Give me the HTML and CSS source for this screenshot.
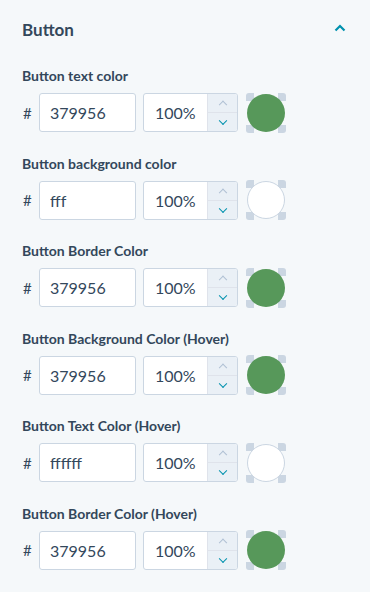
FILE: index.html
```html
<!doctype html>
<html lang="en">
  <head>
    <meta charset="UTF-8" />
    <title>Button colors</title>
    <link rel="stylesheet" href="styles.css">
  </head>

  <body>
    <div class="panel">
      <div class="panel-header">
        <h2 class="panel-title">Button</h2>
        <svg class="collapse" width="12" height="8" viewBox="0 0 12 8">
          <path d="M1.5 6.5 L6 2 L10.5 6.5" fill="none" stroke="#0091ae" stroke-width="2.2" />
        </svg>
      </div>

      <!-- Color fields -->
      <div class="field">
        <label class="field-label">Button text color</label>
        <div class="color-row">
          <span class="hash">#</span>
          <input class="hex-input" type="text" value="379956" />
          <div class="opacity">
            <input class="opacity-input" type="text" value="100%" />
            <div class="stepper">
              <span class="step up"></span>
              <span class="step down"></span>
            </div>
          </div>
          <div class="swatch"><span class="swatch-color green"></span></div>
        </div>
      </div>

      <div class="field">
        <label class="field-label">Button background color</label>
        <div class="color-row">
          <span class="hash">#</span>
          <input class="hex-input" type="text" value="fff" />
          <div class="opacity">
            <input class="opacity-input" type="text" value="100%" />
            <div class="stepper">
              <span class="step up"></span>
              <span class="step down"></span>
            </div>
          </div>
          <div class="swatch"><span class="swatch-color white"></span></div>
        </div>
      </div>

      <div class="field">
        <label class="field-label">Button Border Color</label>
        <div class="color-row">
          <span class="hash">#</span>
          <input class="hex-input" type="text" value="379956" />
          <div class="opacity">
            <input class="opacity-input" type="text" value="100%" />
            <div class="stepper">
              <span class="step up"></span>
              <span class="step down"></span>
            </div>
          </div>
          <div class="swatch"><span class="swatch-color green"></span></div>
        </div>
      </div>

      <div class="field">
        <label class="field-label">Button Background Color (Hover)</label>
        <div class="color-row">
          <span class="hash">#</span>
          <input class="hex-input" type="text" value="379956" />
          <div class="opacity">
            <input class="opacity-input" type="text" value="100%" />
            <div class="stepper">
              <span class="step up"></span>
              <span class="step down"></span>
            </div>
          </div>
          <div class="swatch"><span class="swatch-color green"></span></div>
        </div>
      </div>

      <div class="field">
        <label class="field-label">Button Text Color (Hover)</label>
        <div class="color-row">
          <span class="hash">#</span>
          <input class="hex-input" type="text" value="ffffff" />
          <div class="opacity">
            <input class="opacity-input" type="text" value="100%" />
            <div class="stepper">
              <span class="step up"></span>
              <span class="step down"></span>
            </div>
          </div>
          <div class="swatch"><span class="swatch-color white"></span></div>
        </div>
      </div>

      <div class="field">
        <label class="field-label">Button Border Color (Hover)</label>
        <div class="color-row">
          <span class="hash">#</span>
          <input class="hex-input" type="text" value="379956" />
          <div class="opacity">
            <input class="opacity-input" type="text" value="100%" />
            <div class="stepper">
              <span class="step up"></span>
              <span class="step down"></span>
            </div>
          </div>
          <div class="swatch"><span class="swatch-color green"></span></div>
        </div>
      </div>
    </div>
  </body>
</html>
```

FILE: styles.css
```css
body {
  margin: 0;
  background-color: #f5f8fa;
  font-family: Lato, "Open Sans", sans-serif;
  color: #33475b;
}

.panel {
  padding: 18px 24px 0 22px;
}

.panel-header {
  display: flex;
  align-items: center;
  justify-content: space-between;
  height: 22px;
  margin-bottom: 27px;
}

.panel-title {
  margin: 0;
  font-size: 17px;
  font-weight: 700;
}

.collapse {
  margin-top: -2px;
}

.field {
  margin-bottom: 22.5px;
}

.field-label {
  display: block;
  font-size: 14px;
  font-weight: 700;
  line-height: 18px;
  margin-bottom: 8px;
}

.color-row {
  display: flex;
  align-items: center;
  height: 39px;
}

.hash {
  width: 16px;
  margin-left: 1px;
  font-size: 15px;
}

input {
  font-family: inherit;
  color: #33475b;
  font-size: 16px;
  outline: none;
}

.hex-input {
  box-sizing: border-box;
  width: 97px;
  height: 39px;
  padding: 0 10px;
  border: 1px solid #cbd6e2;
  border-radius: 3px;
  background-color: white;
}

.opacity {
  display: flex;
  box-sizing: border-box;
  width: 95px;
  height: 39px;
  margin-left: 7px;
  border: 1px solid #cbd6e2;
  border-radius: 3px;
  background-color: white;
  overflow: hidden;
}

.opacity-input {
  box-sizing: border-box;
  width: 63px;
  padding: 0 0 0 11px;
  border: none;
  background: transparent;
}

.stepper {
  display: flex;
  flex-direction: column;
  width: 30px;
  border-left: 1px solid #dfe3eb;
  background-color: #eaf0f6;
}

.step {
  position: relative;
  flex: 1;
}

.step.up {
  border-bottom: 1px solid #dfe3eb;
}

.step::after {
  content: "";
  position: absolute;
  left: 50%;
  top: 50%;
  width: 5px;
  height: 5px;
  border-style: solid;
  border-width: 0 1.5px 1.5px 0;
}

.step.up::after {
  border-color: #b0c1d4;
  transform: translate(-50%, -20%) rotate(-135deg);
}

.step.down::after {
  border-color: #0091ae;
  transform: translate(-50%, -70%) rotate(45deg);
}

.swatch {
  display: flex;
  align-items: center;
  justify-content: center;
  width: 40px;
  height: 40px;
  margin-left: 8px;
  background:
    linear-gradient(#cbd6e2, #cbd6e2) top left / 8px 8px no-repeat,
    linear-gradient(#cbd6e2, #cbd6e2) top right / 8px 8px no-repeat,
    linear-gradient(#cbd6e2, #cbd6e2) bottom left / 8px 8px no-repeat,
    linear-gradient(#cbd6e2, #cbd6e2) bottom right / 8px 8px no-repeat;
  border-radius: 3px;
}

.swatch-color {
  box-sizing: border-box;
  width: 38px;
  height: 38px;
  border-radius: 50%;
}

.green {
  background-color: #57985a;
}

.white {
  background-color: white;
  border: 1px solid #cbd6e2;
}
```
